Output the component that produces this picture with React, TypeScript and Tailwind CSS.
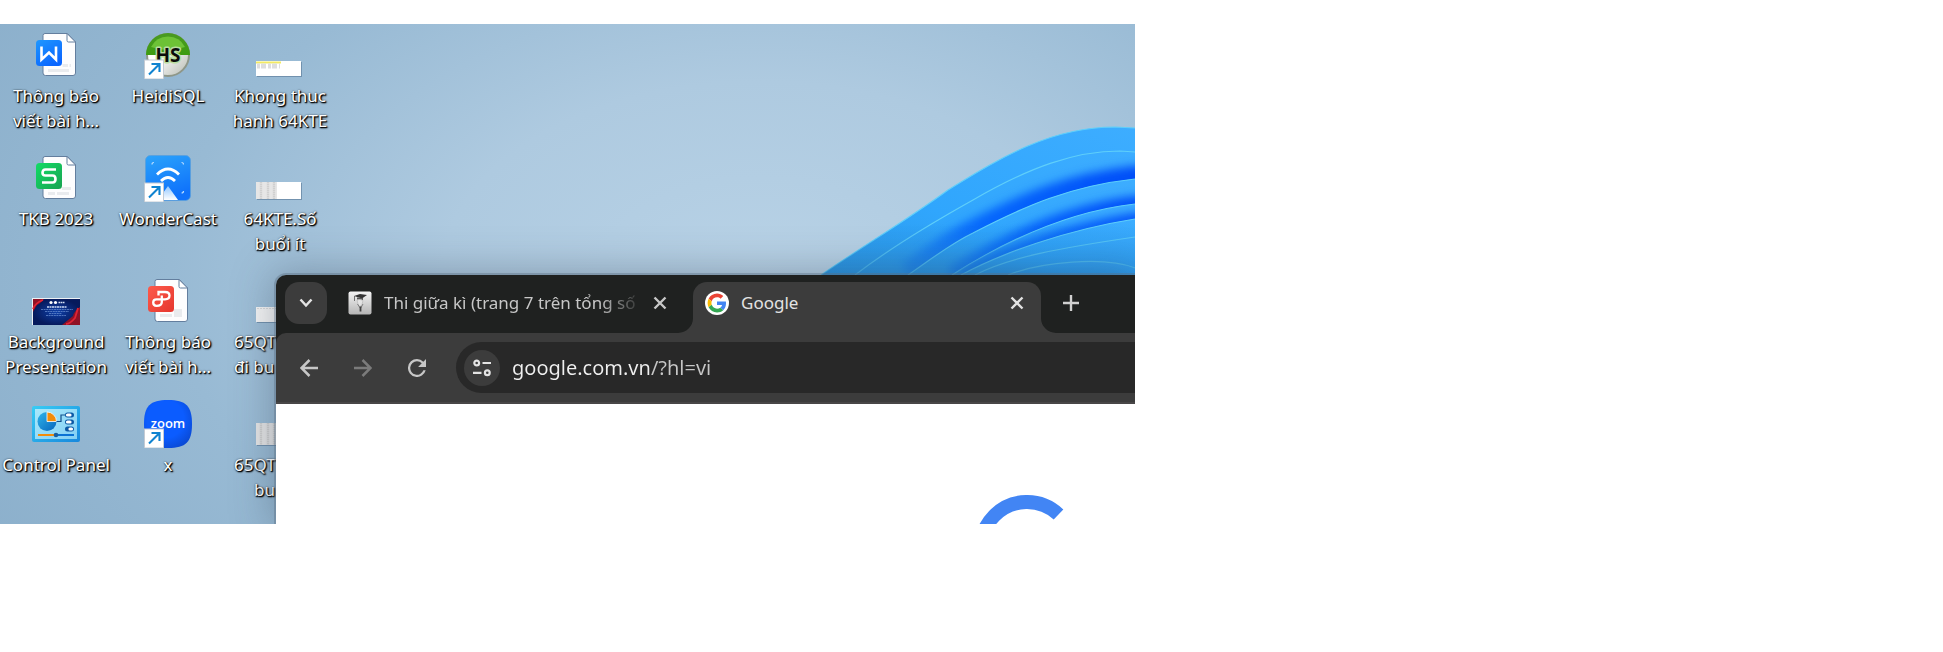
import React from "react";

function ShortcutArrow() {
  return (
    <g>
      <rect x="0.5" y="29" width="19" height="19" fill="#fff" stroke="#c3cad3" strokeWidth="1" />
      <path d="M5 43.5 L14.5 34 M7.5 33 H15.5 V41" fill="none" stroke="#0f83d0" strokeWidth="2.1" />
    </g>
  );
}

function Page({ children }: { children: React.ReactNode }) {
  return (
    <>
      <path
        d="M13 2.5 H35.5 L43.5 11 V42 Q43.5 44.5 41 44.5 H13.5 Q11 44.5 11 42 V4.5 Q11 2.5 13 2.5Z"
        fill="#fdfdfe"
        stroke="#637e9e"
        strokeWidth="1"
      />
      <path d="M35 2.5 V9.5 Q35 11 36.5 11 H43.5 Z" fill="#fff" stroke="#637e9e" strokeWidth="1" />
      {children}
    </>
  );
}

function WriterIcon() {
  return (
    <svg viewBox="0 0 48 48" className="size-12" aria-hidden="true">
      <defs>
        <linearGradient id="writer" x2="0.6" y2="1">
          <stop offset="0" stopColor="#1f98ff" />
          <stop offset="1" stopColor="#0a66ff" />
        </linearGradient>
      </defs>
      <Page>
        <path d="M30.5 33 h5.5 v3 h-5.5z M37.5 33 h1.5 v3 h-1.5z M16 38 h21 v3 H16z" fill="#e9ebee" />
      </Page>
      <rect x="4" y="9" width="26" height="26" rx="3.5" fill="url(#writer)" />
      <path d="M9.5 15.5 V28.5 L17 21.5 L24 28.5 V15.5" fill="none" stroke="#fff" strokeWidth="2.6" />
    </svg>
  );
}

function SheetIcon() {
  return (
    <svg viewBox="0 0 48 48" className="size-12" aria-hidden="true">
      <defs>
        <linearGradient id="sheet" x2="1" y2="1">
          <stop offset="0" stopColor="#12dc66" />
          <stop offset="1" stopColor="#18a251" />
        </linearGradient>
      </defs>
      <Page>
        <path d="M30 33 h9 v3 h-9z M16 38 h7 v3 H16z M25 38 h12 v3 H25z" fill="#e9ebee" />
      </Page>
      <rect x="4" y="9" width="26" height="26" rx="3.5" fill="url(#sheet)" />
      <path
        d="M24 15.5 H13.5 Q10.5 15.5 10.5 18.7 Q10.5 21.5 13.5 21.5 H20.5 Q23.5 21.5 23.5 25 Q23.5 28.5 20.5 28.5 H10"
        fill="none"
        stroke="#fff"
        strokeWidth="2.6"
      />
    </svg>
  );
}

function PdfIcon() {
  return (
    <svg viewBox="0 0 48 48" className="size-12" aria-hidden="true">
      <defs>
        <linearGradient id="pdf" x2="1" y2="1">
          <stop offset="0" stopColor="#fd5a4b" />
          <stop offset="1" stopColor="#e5372f" />
        </linearGradient>
      </defs>
      <Page>
        <path d="M30 32 h8 v8 h-8z M16 37 h12 v3 H16z" fill="#e9ebee" />
      </Page>
      <rect x="4" y="9" width="26" height="26" rx="3.5" fill="url(#pdf)" />
      <path
        d="M14.5 18.5 V15 H21 Q25.5 15 25.5 18.6 Q25.5 22.3 21 22.3 H12.5 Q9.2 22.3 9.2 25.5 Q9.2 28.8 12.5 28.8 Q17.8 28.8 17.8 25 V18.5"
        fill="none"
        stroke="#fff"
        strokeWidth="2.3"
      />
    </svg>
  );
}

function HeidiIcon() {
  return (
    <svg viewBox="0 0 48 48" className="size-12" aria-hidden="true">
      <defs>
        <linearGradient id="heidi" x2="0" y2="1">
          <stop offset="0" stopColor="#4a9a23" />
          <stop offset="1" stopColor="#3d9c10" />
        </linearGradient>
        <linearGradient id="heidiBase" x2="1" y2="1">
          <stop offset="0.4" stopColor="#ffffff" />
          <stop offset="1" stopColor="#b5b9b0" />
        </linearGradient>
      </defs>
      <circle cx="24" cy="24" r="21" fill="url(#heidiBase)" stroke="#8f9789" strokeWidth="2" />
      <path d="M2 24 A22 22 0 0 1 46 24 Z" fill="url(#heidi)" />
      <path d="M7 16 A19 19 0 0 1 41 16 Q24 22 7 16Z" fill="#6dc236" />
      <text
        x="24"
        y="31"
        textAnchor="middle"
        className="font-['Noto_Sans',sans-serif] text-[19px] font-bold"
        fill="#0b0b0b"
        stroke="#b9dda0"
        strokeWidth="3"
        strokeLinejoin="round"
        paintOrder="stroke"
      >
        HS
      </text>
      <ShortcutArrow />
    </svg>
  );
}

function WonderCastIcon() {
  return (
    <svg viewBox="0 0 48 48" className="size-12" aria-hidden="true">
      <defs>
        <linearGradient id="cast" x2="0.3" y2="1">
          <stop offset="0" stopColor="#2ba3fb" />
          <stop offset="1" stopColor="#0f72fb" />
        </linearGradient>
        <linearGradient id="beam" x2="0" y2="1">
          <stop offset="0" stopColor="#8fc6ff" />
          <stop offset="1" stopColor="#ffffff" />
        </linearGradient>
      </defs>
      <rect x="1.5" y="1.5" width="45" height="45" rx="5" fill="url(#cast)" stroke="#5b9fdc" strokeWidth="0.8" />
      <path d="M24 32 L34 46 H14Z" fill="url(#beam)" />
      <path d="M13 20.5 Q24 9.5 35 20.5 M17 27 Q24 20 31 27" fill="none" stroke="#fff" strokeWidth="2.8" />
      <path
        d="M8 10.5 Q8 8.5 10 8.5 M37.5 8.5 Q39.5 8.5 39.5 10.5 M39.5 37 Q39.5 39 37.5 39"
        fill="none"
        stroke="#b9dcff"
        strokeWidth="1.2"
      />
      <ShortcutArrow />
    </svg>
  );
}

function ZoomIcon() {
  return (
    <svg viewBox="0 0 48 48" className="size-12" aria-hidden="true">
      <defs>
        <radialGradient id="zoomBg" cx="0.45" cy="0.4" r="0.7">
          <stop offset="0.55" stopColor="#0b5cff" />
          <stop offset="1" stopColor="#0a46cc" />
        </radialGradient>
      </defs>
      <path d="M24 0 C42 0 48 6 48 24 C48 42 42 48 24 48 C6 48 0 42 0 24 C0 6 6 0 24 0Z" fill="url(#zoomBg)" />
      <text
        x="24"
        y="28"
        textAnchor="middle"
        className="font-['Open_Sans',sans-serif] text-[13px] font-semibold"
        fill="#fff"
      >
        zoom
      </text>
      <ShortcutArrow />
    </svg>
  );
}

function ControlPanelIcon() {
  return (
    <svg viewBox="0 0 48 48" className="size-12" aria-hidden="true">
      <defs>
        <linearGradient id="cpl" x2="1" y2="1">
          <stop offset="0" stopColor="#38cdf5" />
          <stop offset="1" stopColor="#1787dc" />
        </linearGradient>
        <linearGradient id="cplIn" x2="1" y2="1">
          <stop offset="0" stopColor="#a9e8fb" />
          <stop offset="1" stopColor="#83d0f4" />
        </linearGradient>
        <linearGradient id="pie" x2="1" y2="1">
          <stop offset="0" stopColor="#2fb4ea" />
          <stop offset="1" stopColor="#0766bd" />
        </linearGradient>
      </defs>
      <rect x="0" y="6" width="48" height="36" rx="2" fill="url(#cpl)" />
      <rect x="3" y="9" width="42" height="30" fill="url(#cplIn)" />
      <circle cx="15" cy="21.5" r="9.5" fill="url(#pie)" />
      <path d="M15 21.5 V12 A9.5 9.5 0 0 1 24.5 21.5Z" fill="#f28c0a" stroke="#fff" strokeWidth="0.8" />
      <path d="M24.5 21.5 H29 V15 H33" fill="none" stroke="#12508c" strokeWidth="1.2" />
      <path d="M35.5 15 h4 M35.5 22 h4 M35.5 29 h4" stroke="#0c5aa6" strokeWidth="5" strokeLinecap="round" />
      <path d="M35.5 15 h2.5 M35.5 22 h2.5 M38 29 h1.5" stroke="#fff" strokeWidth="3.2" strokeLinecap="round" />
      <path d="M6 35 H22" stroke="#f28c0a" strokeWidth="2" />
      <path d="M26 35 H42" stroke="#0a72d4" strokeWidth="2" />
      <circle cx="24" cy="35" r="2.3" fill="#1a5f9e" />
    </svg>
  );
}

function PosterIcon() {
  return (
    <svg viewBox="0 0 48 48" className="size-12" aria-hidden="true">
      <defs>
        <radialGradient id="poster">
          <stop offset="0" stopColor="#0e3fa8" />
          <stop offset="1" stopColor="#061a5c" />
        </radialGradient>
      </defs>
      <rect x="0" y="21" width="48" height="27" fill="#eef1f4" />
      <rect x="1" y="22" width="47" height="26" fill="url(#poster)" />
      <path d="M1 22 H12 Q8 27 5 28 Q3 31 1 35Z M48 30 Q42 34 41 39 Q36 43 30 48 H48Z" fill="#8f1226" />
      <path d="M1 32 Q3 26 11 23 M46 31 Q44 38 43 41 Q38 47 34 47" fill="none" stroke="#df2335" strokeWidth="1.8" />
      <circle cx="19" cy="25.5" r="1.6" fill="#fff" />
      <circle cx="23.5" cy="25.5" r="1.6" fill="#fff" />
      <path d="M26.5 25.5 H33" stroke="#d8e2f5" strokeWidth="1.6" strokeDasharray="1.5 0.5" />
      <path d="M15 30 H35" stroke="#cbd8f2" strokeWidth="1.6" strokeDasharray="2 0.5" />
      <path
        d="M9 32.5 H41 M13 34.5 H37 M17 36.5 H30 M14 38.5 H34"
        stroke="#6f92d4"
        strokeWidth="0.7"
        strokeDasharray="2 0.6"
      />
    </svg>
  );
}

function SheetThumb({ top, kind }: { top: number; kind: "yellow" | "columns" | "blank" }) {
  const height = 45 - top;
  return (
    <svg viewBox="0 0 48 48" className="size-12" aria-hidden="true">
      <rect x="1" y={top + 1} width="45" height={height} fill="#5f7f9d" opacity="0.7" />
      <rect x="0" y={top} width="45" height={height} fill={kind === "yellow" ? "#fff" : "#f6f6f6"} />
      {kind === "yellow" && (
        <>
          <path d="M0 31.5 H25" stroke="#f2ea63" strokeWidth="2" />
          <path d="M1 35 H24" stroke="#dedede" strokeWidth="5" strokeDasharray="3 1 5 2" />
        </>
      )}
      {kind === "columns" && (
        <>
          <rect x="21" y={top} width="24" height={height} fill="#fff" />
          <rect x="0" y={top} width="21" height={height} fill="#e6e6e6" />
          <path
            d={`M5 ${top} V45 M12 ${top} V45 M18 ${top} V45`}
            stroke="#d0d0d0"
            strokeWidth="2.4"
            strokeDasharray="1.5 0.5"
          />
        </>
      )}
      {kind === "blank" && <path d="M1 31.5 H20" stroke="#dadada" strokeWidth="1" strokeDasharray="2 1" />}
    </svg>
  );
}

type Item = { icon: React.ReactNode; lines: string[]; align?: "start" | "indent" };

const columns: Item[][] = [
  [
    { icon: <WriterIcon />, lines: ["Thông báo", "viết bài h..."] },
    { icon: <SheetIcon />, lines: ["TKB 2023"] },
    { icon: <PosterIcon />, lines: ["Background", "Presentation"] },
    { icon: <ControlPanelIcon />, lines: ["Control Panel"] },
  ],
  [
    { icon: <HeidiIcon />, lines: ["HeidiSQL"] },
    { icon: <WonderCastIcon />, lines: ["WonderCast"] },
    { icon: <PdfIcon />, lines: ["Thông báo", "viết bài h..."] },
    { icon: <ZoomIcon />, lines: ["x"] },
  ],
  [
    { icon: <SheetThumb top={30} kind="yellow" />, lines: ["Khong thuc", "hanh 64KTE"] },
    { icon: <SheetThumb top={28} kind="columns" />, lines: ["64KTE.Số", "buổi ít"] },
    { icon: <SheetThumb top={30} kind="blank" />, lines: ["65QT", "đi bu"], align: "start" },
    { icon: <SheetThumb top={23} kind="columns" />, lines: ["65QT", "bu"], align: "indent" },
  ],
];

function DesktopItem({ icon, lines, align }: Item) {
  return (
    <button type="button" className="flex h-[123px] w-28 flex-col items-center gap-1">
      {icon}
      <span
        className={
          "flex w-full flex-col whitespace-nowrap text-[17px] leading-[25px] text-white [text-shadow:1px_1px_1px_#000,1px_1px_2px_#000,0_0_2px_#0008] " +
          (align ? "items-start pl-[10px]" : "items-center")
        }
      >
        {lines.map((line, i) => (
          <span key={line} className={align === "indent" && i === 1 ? "pl-5" : ""}>
            {line}
          </span>
        ))}
      </span>
    </button>
  );
}

/* Each ribbon casts a soft shade of its own edge onto the ribbon above it. */
const ribbons = [
  { d: "M21 175 C60 148 110 118 148 90 C200 58 250 27 315 27 L335 28", shade: 0 },
  { d: "M55 175 C85 152 130 124 173 100 C230 67 275 51 320 51 L335 52", shade: 0 },
  { d: "M108 175 C130 160 150 144 173 133 C225 106 270 86 335 79", shade: 26 },
  { d: "M152 175 C185 154 255 113 335 104", shade: 16 },
  { d: "M161 175 C200 154 265 130 335 119", shade: 12 },
  { d: "M175 175 C210 157 260 148 335 137", shade: 0 },
  { d: "M208 175 C240 162 305 156 335 168", shade: 0 },
];

function Bloom() {
  return (
    <svg viewBox="0 0 335 175" className="absolute right-0 top-[76px] h-[175px] w-[335px]" aria-hidden="true">
      <defs>
        <linearGradient id="ribbon" x1="0" y1="1" x2="1" y2="0">
          <stop offset="0" stopColor="#2c9ae8" />
          <stop offset="0.4" stopColor="#30a6fd" />
          <stop offset="1" stopColor="#3dadff" />
        </linearGradient>
        <linearGradient id="shade" gradientUnits="userSpaceOnUse" x1="90" y1="175" x2="335" y2="70">
          <stop offset="0" stopColor="#0a5cf8" stopOpacity="0.3" />
          <stop offset="0.4" stopColor="#0060fc" stopOpacity="0.9" />
          <stop offset="1" stopColor="#004df8" />
        </linearGradient>
        <filter id="soft" filterUnits="userSpaceOnUse" x="0" y="0" width="400" height="200">
          <feGaussianBlur stdDeviation="5" />
        </filter>
        <linearGradient id="dim" x2="0" y2="1">
          <stop offset="0.65" stopColor="#2489d6" stopOpacity="0" />
          <stop offset="1" stopColor="#2489d6" stopOpacity="0.5" />
        </linearGradient>
        {ribbons.map((r, i) => (
          <clipPath key={r.d} id={"band" + i}>
            <path d={r.d + " V175 Z"} />
          </clipPath>
        ))}
      </defs>
      {ribbons.map((r, i) => (
        <g key={r.d}>
          {r.shade > 0 && (
            <g clipPath={"url(#band" + (i - 1) + ")"}>
              <path d={r.d + " H380"} fill="none" stroke="url(#shade)" strokeWidth={r.shade} filter="url(#soft)" />
            </g>
          )}
          <path d={r.d + " V175 Z"} fill="url(#ribbon)" />
          <path d={r.d} fill="none" stroke="#5fcffa" strokeWidth="1.2" />
        </g>
      ))}
      <path d={ribbons[0].d + " V175 Z"} fill="url(#dim)" />
    </svg>
  );
}

function CloseGlyph() {
  return (
    <svg viewBox="0 0 14 14" className="size-[14px]" aria-hidden="true">
      <path d="M1.5 1.5 L12.5 12.5 M12.5 1.5 L1.5 12.5" stroke="currentColor" strokeWidth="2.4" />
    </svg>
  );
}

function GraduateIcon() {
  return (
    <svg viewBox="0 0 24 24" className="size-6 shrink-0" aria-hidden="true">
      <defs>
        <linearGradient id="grad" x2="0" y2="1">
          <stop offset="0" stopColor="#f4f4f4" />
          <stop offset="1" stopColor="#b5b5b5" />
        </linearGradient>
      </defs>
      <rect x="0.5" y="0.5" width="23" height="23" rx="2" fill="url(#grad)" />
      <path d="M6 5 L12 3 L19 4 L14 7.5Z" fill="#333" />
      <path d="M9 6.5 L15 7 V9 L9 8.5Z" fill="#555" />
      <path d="M6.5 5 V10" stroke="#555" strokeWidth="0.8" />
      <path d="M9 9 Q12 7.5 15 9.5 L13.5 15 H10.5Z" fill="#e4e4e4" stroke="#aaa" strokeWidth="0.5" />
      <path d="M9.5 13 L12.5 17.5 L15 13" fill="none" stroke="#777" strokeWidth="0.9" />
      <path d="M12.5 15.5 V20.5" stroke="#444" strokeWidth="1.8" />
    </svg>
  );
}

function GoogleIcon() {
  return (
    <svg viewBox="0 0 24 24" className="size-6 shrink-0" aria-hidden="true">
      <circle cx="12" cy="12" r="12" fill="#fff" />
      <g transform="translate(2.6 2.6) scale(0.392)">
        <path fill="#EA4335" d="M24 9.5c3.54 0 6.71 1.22 9.21 3.6l6.85-6.85C35.9 2.38 30.47 0 24 0 14.62 0 6.51 5.38 2.56 13.22l7.98 6.19C12.43 13.72 17.74 9.5 24 9.5z" />
        <path fill="#4285F4" d="M46.98 24.55c0-1.57-.15-3.09-.38-4.55H24v9.02h12.94c-.58 2.96-2.26 5.48-4.78 7.18l7.73 6c4.51-4.18 7.09-10.36 7.09-17.65z" />
        <path fill="#FBBC05" d="M10.53 28.59c-.48-1.45-.76-2.99-.76-4.59s.27-3.14.76-4.59l-7.98-6.19C.92 16.46 0 20.12 0 24c0 3.88.92 7.54 2.56 10.78l7.97-6.19z" />
        <path fill="#34A853" d="M24 48c6.48 0 11.93-2.13 15.89-5.81l-7.73-6c-2.15 1.45-4.92 2.3-8.16 2.3-6.26 0-11.57-4.22-13.47-9.91l-7.98 6.19C6.51 42.62 14.62 48 24 48z" />
      </g>
    </svg>
  );
}

function TabFlare({ flip }: { flip?: boolean }) {
  return (
    <svg
      viewBox="0 0 15 15"
      className={"absolute bottom-0 size-[15px] " + (flip ? "left-full" : "right-full -scale-x-100")}
      aria-hidden="true"
    >
      <path d="M0 0 A15 15 0 0 0 15 15 H0Z" fill="#3c3c3c" />
    </svg>
  );
}

function BrowserWindow() {
  return (
    <section
      aria-label="Google"
      className="absolute bottom-0 left-[276px] right-0 top-[251px] flex flex-col overflow-hidden rounded-tl-[10px] bg-[#1f2120] text-[17px]"
    >
      <div className="flex h-[58px] shrink-0 pl-[9px] pt-[7px]">
        <button
          type="button"
          aria-label="Search tabs"
          className="flex size-[42px] items-center justify-center rounded-[14px] bg-[#3c3c3c] text-[#e3e3e3]"
        >
          <svg viewBox="0 0 14 10" className="h-[10px] w-[14px]" aria-hidden="true">
            <path d="M1.5 1.5 L7 7.5 L12.5 1.5" fill="none" stroke="currentColor" strokeWidth="2.5" />
          </svg>
        </button>
        <div role="tablist" className="flex">
          <div className="flex h-[42px] w-[366px] items-center pl-[21px] pr-[26px] text-[#c7c7c7]">
            <GraduateIcon />
            <button
              type="button"
              role="tab"
              aria-selected="false"
              className="ml-3 w-[252px] overflow-hidden whitespace-nowrap text-left [mask-image:linear-gradient(to_right,#000_215px,transparent_260px)]"
            >
              Thi giữa kì (trang 7 trên tổng số
            </button>
            <button type="button" aria-label="Close tab" className="ml-auto">
              <CloseGlyph />
            </button>
          </div>
          <div className="relative flex h-[51px] w-[348px] items-center rounded-t-[14px] bg-[#3c3c3c] pb-[9px] pl-3 pr-[17px] text-[#e3e3e3]">
            <TabFlare />
            <TabFlare flip />
            <GoogleIcon />
            <button type="button" role="tab" aria-selected="true" className="ml-3">
              Google
            </button>
            <button type="button" aria-label="Close tab" className="ml-auto">
              <CloseGlyph />
            </button>
          </div>
        </div>
        <button
          type="button"
          aria-label="New tab"
          className="ml-[9px] flex size-[42px] items-center justify-center text-[#d0d0d0]"
        >
          <svg viewBox="0 0 16 16" className="size-4" aria-hidden="true">
            <path d="M8 0 V16 M0 8 H16" stroke="currentColor" strokeWidth="2.4" />
          </svg>
        </button>
      </div>

      <div className="flex h-[71px] shrink-0 items-start rounded-tl-[10px] border-b-2 border-[#484647] bg-[#3c3c3c] pt-[9px]">
        <div className="flex h-[51px] items-center gap-9 pl-6 text-[#c7c7c7]">
          <button type="button" aria-label="Back">
            <svg viewBox="0 0 18 18" className="size-[18px]" aria-hidden="true">
              <path d="M18 9 H1.5 M9.5 1 L1.5 9 L9.5 17" fill="none" stroke="currentColor" strokeWidth="2.5" />
            </svg>
          </button>
          <button type="button" aria-label="Forward" className="text-[#7b7b7b]">
            <svg viewBox="0 0 18 18" className="size-[18px]" aria-hidden="true">
              <path d="M0 9 H16.5 M8.5 1 L16.5 9 L8.5 17" fill="none" stroke="currentColor" strokeWidth="2.5" />
            </svg>
          </button>
          <button type="button" aria-label="Reload">
            <svg viewBox="4 4 16 16" className="size-[18px]" aria-hidden="true">
              <path
                fill="currentColor"
                d="M17.65 6.35A7.96 7.96 0 0 0 12 4a8 8 0 1 0 7.73 10h-2.08A6 6 0 1 1 12 6c1.66 0 3.14.69 4.22 1.78L13 11h7V4l-2.35 2.35z"
              />
            </svg>
          </button>
        </div>
        <div className="ml-[30px] flex h-[51px] min-w-0 flex-1 items-center rounded-l-full bg-[#282828] pl-2">
          <button
            type="button"
            aria-label="View site information"
            className="flex size-9 shrink-0 items-center justify-center rounded-full bg-[#3c3c3c] text-[#e3e3e3]"
          >
            <svg viewBox="0 0 18 18" className="size-[18px]" aria-hidden="true">
              <g fill="none" stroke="currentColor" strokeWidth="2.2">
                <circle cx="3.7" cy="4" r="2.4" />
                <path d="M9.5 4 H18 M0 13.8 H8.5" />
                <circle cx="14.3" cy="13.8" r="2.4" />
              </g>
            </svg>
          </button>
          <input
            type="text"
            aria-label="Address"
            defaultValue="google.com.vn/?hl=vi"
            className="ml-3 min-w-0 flex-1 bg-[linear-gradient(to_right,#f0f0f0_138px,#c7c7c7_138px)] bg-clip-text text-[20px] leading-7 text-transparent outline-none"
          />
        </div>
      </div>

      <div className="flex flex-1 overflow-hidden bg-white pl-[699px] pt-[91px]">
        <svg viewBox="0 0 106 106" className="size-[106px] shrink-0" aria-hidden="true">
          <path d="M83.5 19.5 A46 46 0 1 0 83.5 86.5" fill="none" stroke="#4285f4" strokeWidth="14" />
        </svg>
      </div>
    </section>
  );
}

export default function App() {
  return (
    <div className="min-h-screen bg-white pt-6 font-['Noto_Sans','Open_Sans',sans-serif]">
      <main className="relative w-[58.42%] overflow-hidden bg-[radial-gradient(ellipse_80%_110%_at_67%_50%,#b8d2e6_0%,#aecae0_35%,#98bad4_65%,#8bafcb_100%)]">
        <Bloom />
        <div className="flex pb-[1px] pt-[7px]">
          {columns.map((items, i) => (
            <div key={i} className="flex flex-col">
              {items.map((item, j) => (
                <DesktopItem key={j} {...item} />
              ))}
            </div>
          ))}
        </div>
        <div className="absolute bottom-0 left-[276px] right-0 top-[251px] rounded-tl-[10px] shadow-[0_0_0_2px_#5a6f8266,0_0_40px_4px_#30405059]" />
        <BrowserWindow />
      </main>
    </div>
  );
}
